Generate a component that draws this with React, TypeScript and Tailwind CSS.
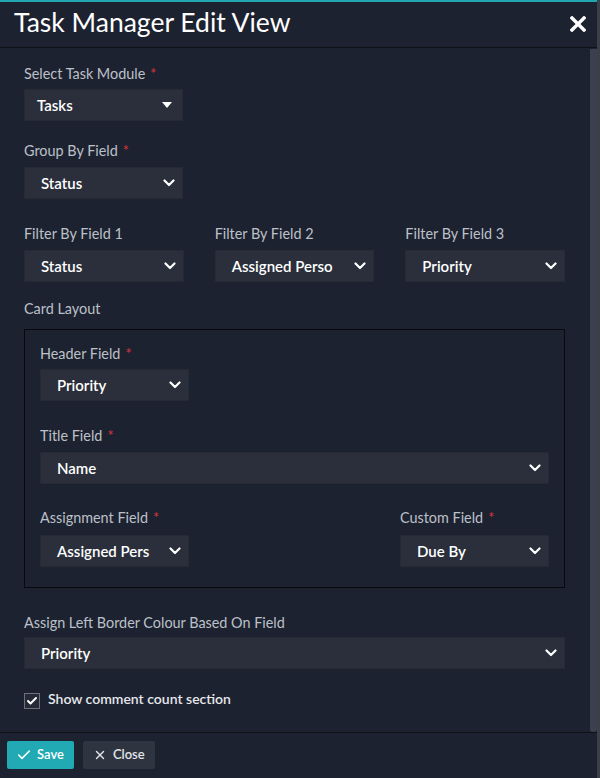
import { Check, X } from 'lucide-react';

function Chevron() {
  return (
    <svg width="12" height="8" viewBox="0 0 12 8" className="shrink-0">
      <path d="M1.5 1.5 L6 6 L10.5 1.5" fill="none" stroke="#ffffff" strokeWidth="2.2" strokeLinecap="round" strokeLinejoin="round" />
    </svg>
  );
}

function Caret() {
  return (
    <svg width="10" height="6" viewBox="0 0 10 6" className="shrink-0">
      <path d="M0 0 H10 L5 6 Z" fill="#ffffff" />
    </svg>
  );
}

function Label({ text, required }: { text: string; required?: boolean }) {
  return (
    <div className="text-[14.4px] leading-[18px] text-[#bcc0c8]">
      {text}
      {required && <span className="ml-[5px] text-[#d9363e]">*</span>}
    </div>
  );
}

function Select({ value, className = '', caret }: { value: string; className?: string; caret?: boolean }) {
  return (
    <div
      className={`flex h-[32px] items-center justify-between gap-2 bg-[#2a2f3b] border border-[#252a35] ${
        caret ? 'pl-[12px] pr-[10px]' : 'pl-[16px] pr-[7px]'
      } ${className}`}
    >
      <span className="whitespace-nowrap text-[15px] font-semibold text-white">{value}</span>
      {caret ? <Caret /> : <Chevron />}
    </div>
  );
}

export default function App() {
  return (
    <div className="flex h-[778px] w-[600px] bg-[#3b3f48] font-['Lato','Liberation_Sans',sans-serif]">
      <div className="flex w-[597px] flex-col border-t-2 border-[#1fa6b1] bg-[#1d2230]">
        {/* header */}
        <div className="flex h-[46px] items-center justify-between border-b border-[#0e1118] pb-[4px] pl-[14px] pr-[11px]">
          <h1 className="text-[26.5px] leading-none text-white">Task Manager Edit View</h1>
          <svg width="16" height="16" viewBox="0 0 16 16" className="mt-[2px]">
            <path d="M2 2 L14 14 M14 2 L2 14" stroke="#ffffff" strokeWidth="3.4" strokeLinecap="square" />
          </svg>
        </div>

        {/* body */}
        <div className="flex flex-1">
          <div className="flex-1 pl-[24px] pr-[25px] pt-[17px]">
            <Label text="Select Task Module" required />
            <Select value="Tasks" caret className="mt-[6px] w-[159px]" />

            <div className="mt-[21px]">
              <Label text="Group By Field" required />
              <Select value="Status" className="mt-[7px] w-[159px]" />
            </div>

            <div className="mt-[26px] grid grid-cols-3 gap-x-[31px]">
              <div>
                <Label text="Filter By Field 1" />
                <Select value="Status" className="mt-[7px]" />
              </div>
              <div>
                <Label text="Filter By Field 2" />
                <Select value="Assigned Perso" className="mt-[7px]" />
              </div>
              <div>
                <Label text="Filter By Field 3" />
                <Select value="Priority" className="mt-[7px]" />
              </div>
            </div>

            <div className="mt-[18px]">
              <Label text="Card Layout" />
            </div>
            <div className="mt-[11px] border border-[#07090d] px-[15px] pb-[20px] pt-[15px]">
              <Label text="Header Field" required />
              <Select value="Priority" className="mt-[6px] w-[149px]" />

              <div className="mt-[26px]">
                <Label text="Title Field" required />
                <Select value="Name" className="mt-[7px]" />
              </div>

              <div className="mt-[25px] flex justify-between">
                <div className="w-[149px]">
                  <Label text="Assignment Field" required />
                  <Select value="Assigned Pers" className="mt-[8px]" />
                </div>
                <div className="w-[149px]">
                  <Label text="Custom Field" required />
                  <Select value="Due By" className="mt-[8px]" />
                </div>
              </div>
            </div>

            <div className="mt-[26px]">
              <Label text="Assign Left Border Colour Based On Field" />
              <Select value="Priority" className="mt-[5px]" />
            </div>

            <label className="mt-[24px] flex items-start gap-[8px]">
              <span className="flex h-[16px] w-[16px] items-center justify-center border border-[#6c7180] bg-[#252a35]">
                <Check size={12} strokeWidth={4} color="#ffffff" />
              </span>
              <span className="-mt-[1px] text-[14px] font-semibold leading-[14px] text-[#e6e8eb]">Show comment count section</span>
            </label>
          </div>
          <div className="flex w-[7px] flex-col pt-[1px]">
            <div className="flex-1 rounded-b-[3px] bg-[#3a404d]" />
          </div>
        </div>

        {/* footer */}
        <div className="flex h-[46px] items-start gap-[9px] border-t border-[#0e1118] pl-[7px] pt-[8px]">
          <button className="flex h-[28px] items-center gap-[5px] rounded-[2px] bg-[#21a9b4] pl-[9px] pr-[10px] text-[13px] font-semibold text-white">
            <Check size={16} strokeWidth={2.4} />
            Save
          </button>
          <button className="flex h-[28px] items-center gap-[6px] rounded-[2px] bg-[#2f3441] pl-[10px] pr-[10px] text-[13px] font-semibold text-[#e1e4e8]">
            <X size={14} strokeWidth={2.4} />
            Close
          </button>
        </div>
      </div>
    </div>
  );
}
